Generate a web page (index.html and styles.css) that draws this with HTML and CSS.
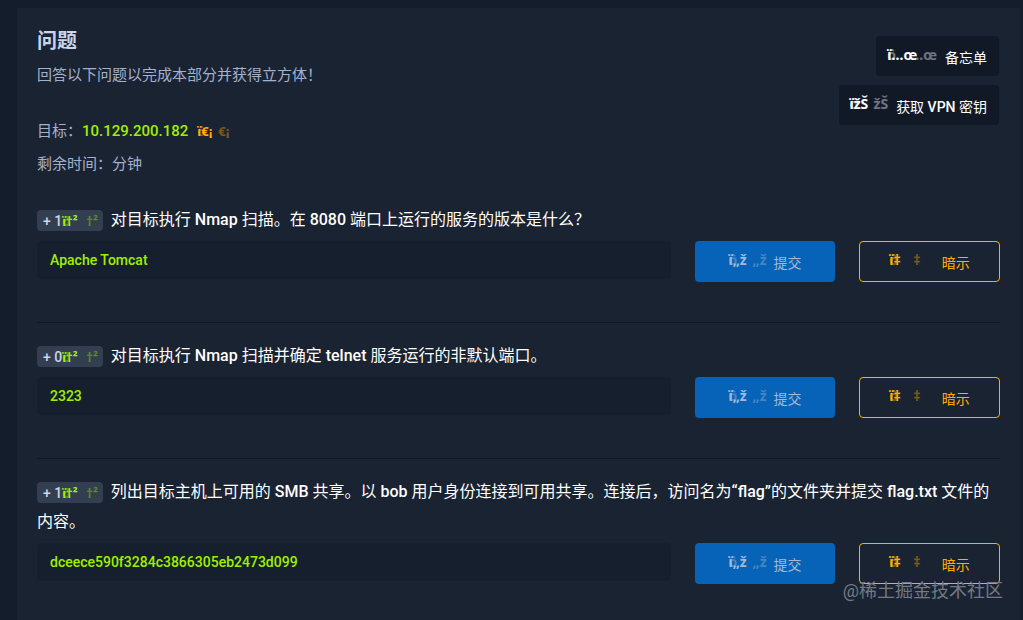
FILE: index.html
```html
<!DOCTYPE html>
<html lang="zh-CN">
<head>
<meta charset="utf-8">
<title>问题</title>
<link rel="stylesheet" href="styles.css">
</head>
<body>
<main class="panel">
  <header class="intro">
    <div>
      <h1 class="title">问题</h1>
      <p class="lead">回答以下问题以完成本部分并获得立方体！</p>
      <p class="target">目标：<span class="ip">10.129.200.182</span><span class="glyph glyph-small"><span class="front">ï€¡</span><span class="back"><span class="lead-char">ô</span>€¡</span></span></p>
      <p class="time">剩余时间：分钟</p>
    </div>
    <div class="actions">
      <button class="tool" type="button"><span class="glyph"><span class="front">ï…œ</span><span class="back"><span class="lead-char">ô</span>…œ</span></span><span class="label">备忘单</span></button>
      <button class="tool" type="button"><span class="glyph"><span class="front">ïžŠ</span><span class="back"><span class="lead-char">ô</span>žŠ</span></span><span class="label">获取 <b>VPN</b> 密钥</span></button>
    </div>
  </header>

  <form class="question">
    <label class="prompt" for="a1"><span class="badge">+ 1<span class="glyph glyph-small"><span class="front">ï†²</span><span class="back"><span class="lead-char">ô</span>†²</span></span></span>对目标执行 <b>Nmap</b> 扫描。在 <b>8080</b> 端口上运行的服务的版本是什么？</label>
    <div class="answer">
      <input class="field" id="a1" type="text" value="Apache Tomcat">
      <button class="submit" type="button"><span class="glyph"><span class="front">ï„ž</span><span class="back"><span class="lead-char">ô</span>„ž</span></span><span class="label">提交</span></button>
      <button class="hint" type="button"><span class="glyph"><span class="front">ï‡</span><span class="back"><span class="lead-char">ô</span>‡</span></span><span class="label">暗示</span></button>
    </div>
  </form>

  <form class="question">
    <label class="prompt" for="a2"><span class="badge">+ 0<span class="glyph glyph-small"><span class="front">ï†²</span><span class="back"><span class="lead-char">ô</span>†²</span></span></span>对目标执行 <b>Nmap</b> 扫描并确定 <b>telnet</b> 服务运行的非默认端口。</label>
    <div class="answer">
      <input class="field" id="a2" type="text" value="2323">
      <button class="submit" type="button"><span class="glyph"><span class="front">ï„ž</span><span class="back"><span class="lead-char">ô</span>„ž</span></span><span class="label">提交</span></button>
      <button class="hint" type="button"><span class="glyph"><span class="front">ï‡</span><span class="back"><span class="lead-char">ô</span>‡</span></span><span class="label">暗示</span></button>
    </div>
  </form>

  <form class="question">
    <label class="prompt" for="a3"><span class="badge">+ 1<span class="glyph glyph-small"><span class="front">ï†²</span><span class="back"><span class="lead-char">ô</span>†²</span></span></span>列出目标主机上可用的 <b>SMB</b> 共享。以 <b>bob</b> 用户身份连接到可用共享。连接后，访问名为<b>“flag”</b>的文件夹并提交 <b>flag.txt</b> 文件的内容。</label>
    <div class="answer">
      <input class="field" id="a3" type="text" value="dceece590f3284c3866305eb2473d099">
      <button class="submit" type="button"><span class="glyph"><span class="front">ï„ž</span><span class="back"><span class="lead-char">ô</span>„ž</span></span><span class="label">提交</span></button>
      <button class="hint" type="button"><span class="glyph"><span class="front">ï‡</span><span class="back"><span class="lead-char">ô</span>‡</span></span><span class="label">暗示</span></button>
    </div>
  </form>
</main>
<div class="watermark">@稀土掘金技术社区</div>
</body>
</html>
```

FILE: styles.css
```css
* { box-sizing: border-box; }

body {
  margin: 0;
  min-height: 100vh;
  display: flex;
  position: relative;
  padding: 8px 3px 0 17px;
  background: #141d2b;
  color: #a4b1cd;
  font-family: Roboto, "Noto Sans CJK SC", sans-serif;
  font-size: 15px;
  line-height: 24px;
}

.panel {
  flex: 1;
  min-width: 0;
  padding: 17px 20px 0;
  background: #1a2332;
}

.intro {
  display: flex;
  justify-content: space-between;
  align-items: flex-start;
}

.title {
  margin: 0 0 6px;
  font-size: 20px;
  line-height: 32px;
  font-weight: 700;
  color: #cad4ec;
}

.lead { margin: 0 0 32px; }
.target { margin: 0 0 9px; }
.time { margin: 0 0 29px; }

.ip {
  margin-right: 9px;
  color: #9fef00;
  font-weight: 500;
}

.target .glyph { color: #ffaf00; }

.actions {
  display: flex;
  flex-direction: column;
  align-items: flex-end;
  gap: 9px;
  margin: 11px 1px 0 0;
}

button {
  display: flex;
  align-items: center;
  border: 0;
  border-radius: 4px;
  font: inherit;
  font-size: 14px;
  white-space: nowrap;
}

.label { padding-top: 3px; }

.label b { font-weight: 500; }

.tool {
  gap: 8px;
  height: 40px;
  padding: 0 12px 0 11px;
  background: #111927;
  color: #fff;
}

.glyph {
  display: inline-block;
  position: relative;
  font-family: "Noto Sans", sans-serif;
  font-size: 14px;
  font-weight: 700;
  line-height: 20px;
  white-space: nowrap;
}

.glyph-small { font-size: 13px; }

.front {
  position: absolute;
  left: 0;
  top: 0;
}

.back { opacity: 0.4; }

.lead-char {
  display: inline-block;
  width: 24px;
  text-align: left;
}

.glyph-small .lead-char { width: 21px; }

.tool .glyph,
.submit .glyph,
.hint .glyph { padding-bottom: 3px; }

.question {
  padding-bottom: 40px;
}

.question + .question {
  padding-top: 18px;
  border-top: 1px solid #111927;
}

.prompt {
  display: block;
  margin-bottom: 6px;
  color: #fff;
  font-size: 16px;
  line-height: 30px;
}

.prompt b { font-weight: 500; }

.badge {
  display: inline-flex;
  align-items: center;
  height: 21px;
  margin-right: 8px;
  padding: 0 5px 0 6px;
  border-radius: 4px;
  background: #333f50;
  color: #cad4ec;
  font-size: 14px;
  font-weight: 500;
  line-height: 20px;
  vertical-align: middle;
  white-space: pre;
}

.badge .glyph { color: #9fef00; }

.badge .lead-char { width: 24px; }

.answer {
  display: grid;
  grid-template-columns: minmax(0, 1fr) 140px 141px;
  gap: 24px;
}

.field {
  width: 100%;
  height: 38px;
  padding: 0 13px;
  border: 0;
  border-radius: 4px;
  background: #161f2d;
  color: #9fef00;
  font: inherit;
  font-size: 14px;
  font-weight: 500;
}

.submit,
.hint {
  height: 41px;
  justify-content: center;
}

.submit {
  gap: 7px;
  background: #0663b7;
  color: #a3b9d5;
}

.hint {
  gap: 21px;
  border: 1px solid #ffaf00;
  background: transparent;
  color: #ffaf00;
}

.watermark {
  position: absolute;
  right: 20px;
  bottom: 21px;
  color: #747a84;
  font-size: 18px;
}
```
